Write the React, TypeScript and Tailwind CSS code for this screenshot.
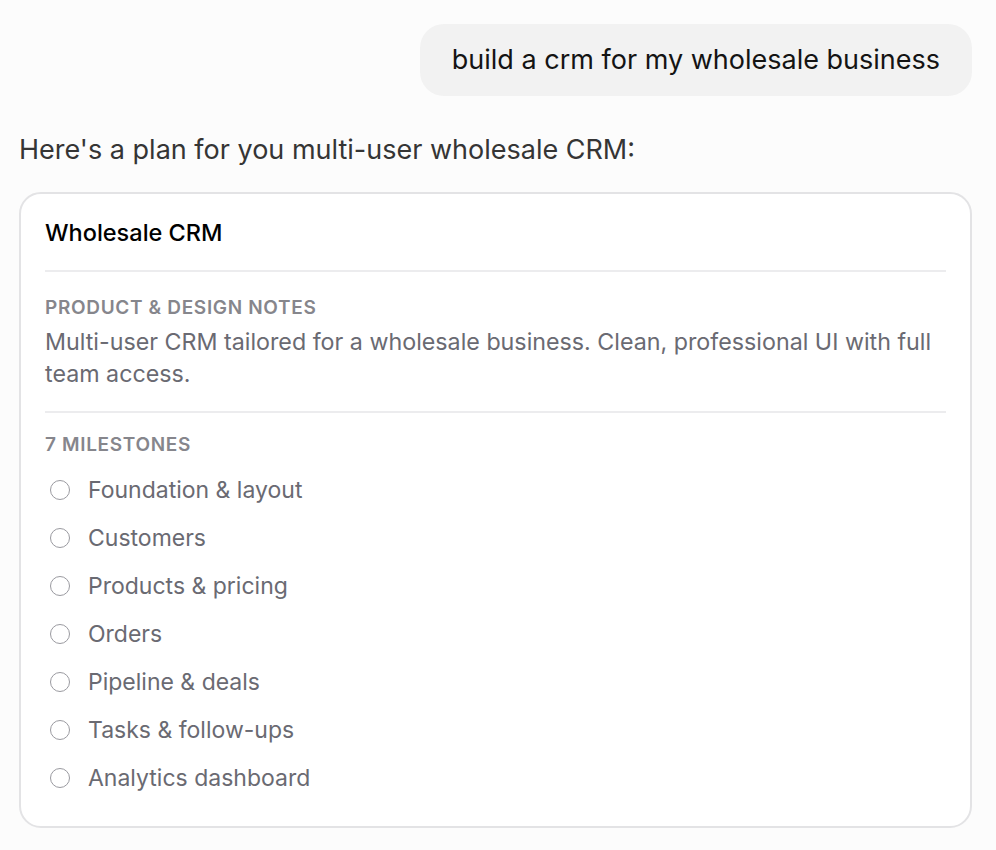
const milestones = [
  'Foundation & layout',
  'Customers',
  'Products & pricing',
  'Orders',
  'Pipeline & deals',
  'Tasks & follow-ups',
  'Analytics dashboard',
];

export default function App() {
  return (
    <div
      className="min-h-screen bg-[#fcfcfc] px-[19px] pt-[24px]"
      style={{ fontFamily: 'Inter, "Noto Sans", sans-serif' }}
    >
      <div className="flex justify-end pr-[5px]">
        <div className="flex h-[72px] items-center rounded-[24px] bg-[#f2f2f2] px-[32px] text-[27px] text-[#141414]">
          build a crm for my wholesale business
        </div>
      </div>

      <p className="mt-[36px] text-[27px] leading-[36px] text-[#353535]">
        Here's a plan for you multi-user wholesale CRM:
      </p>

      <div className="mt-[24px] mr-[5px] rounded-[22px] border-2 border-[#e3e3e5] bg-white px-[24px] pb-[24px]">
        <div className="flex h-[78px] items-center border-b-2 border-[#ececee] pt-[2px] text-[23.5px] font-medium text-black">
          Wholesale CRM
        </div>

        <div className="border-b-2 border-[#ececee] pt-[23px] pb-[21px]">
          <div className="text-[19px] font-semibold uppercase leading-[26px] tracking-[0.035em] text-[#86868c]">
            Product &amp; Design Notes
          </div>
          <p className="mt-[5px] text-[23.25px] leading-[32px] text-[#6a6a72]">
            Multi-user CRM tailored for a wholesale business. Clean, professional UI with full team access.
          </p>
        </div>

        <div className="pt-[19px]">
          <div className="text-[19px] font-semibold uppercase leading-[26px] tracking-[0.035em] text-[#86868c]">
            7 Milestones
          </div>
          <ul className="mt-[8px] flex flex-col">
            {milestones.map((m) => (
              <li key={m} className="flex h-[48px] items-center gap-[18px] pl-[5px]">
                <span className="h-[20px] w-[20px] shrink-0 rounded-full border-[1.5px] border-[#9a9aa0]" />
                <span className="text-[23px] text-[#6a6a72]">{m}</span>
              </li>
            ))}
          </ul>
        </div>
      </div>
    </div>
  );
}
